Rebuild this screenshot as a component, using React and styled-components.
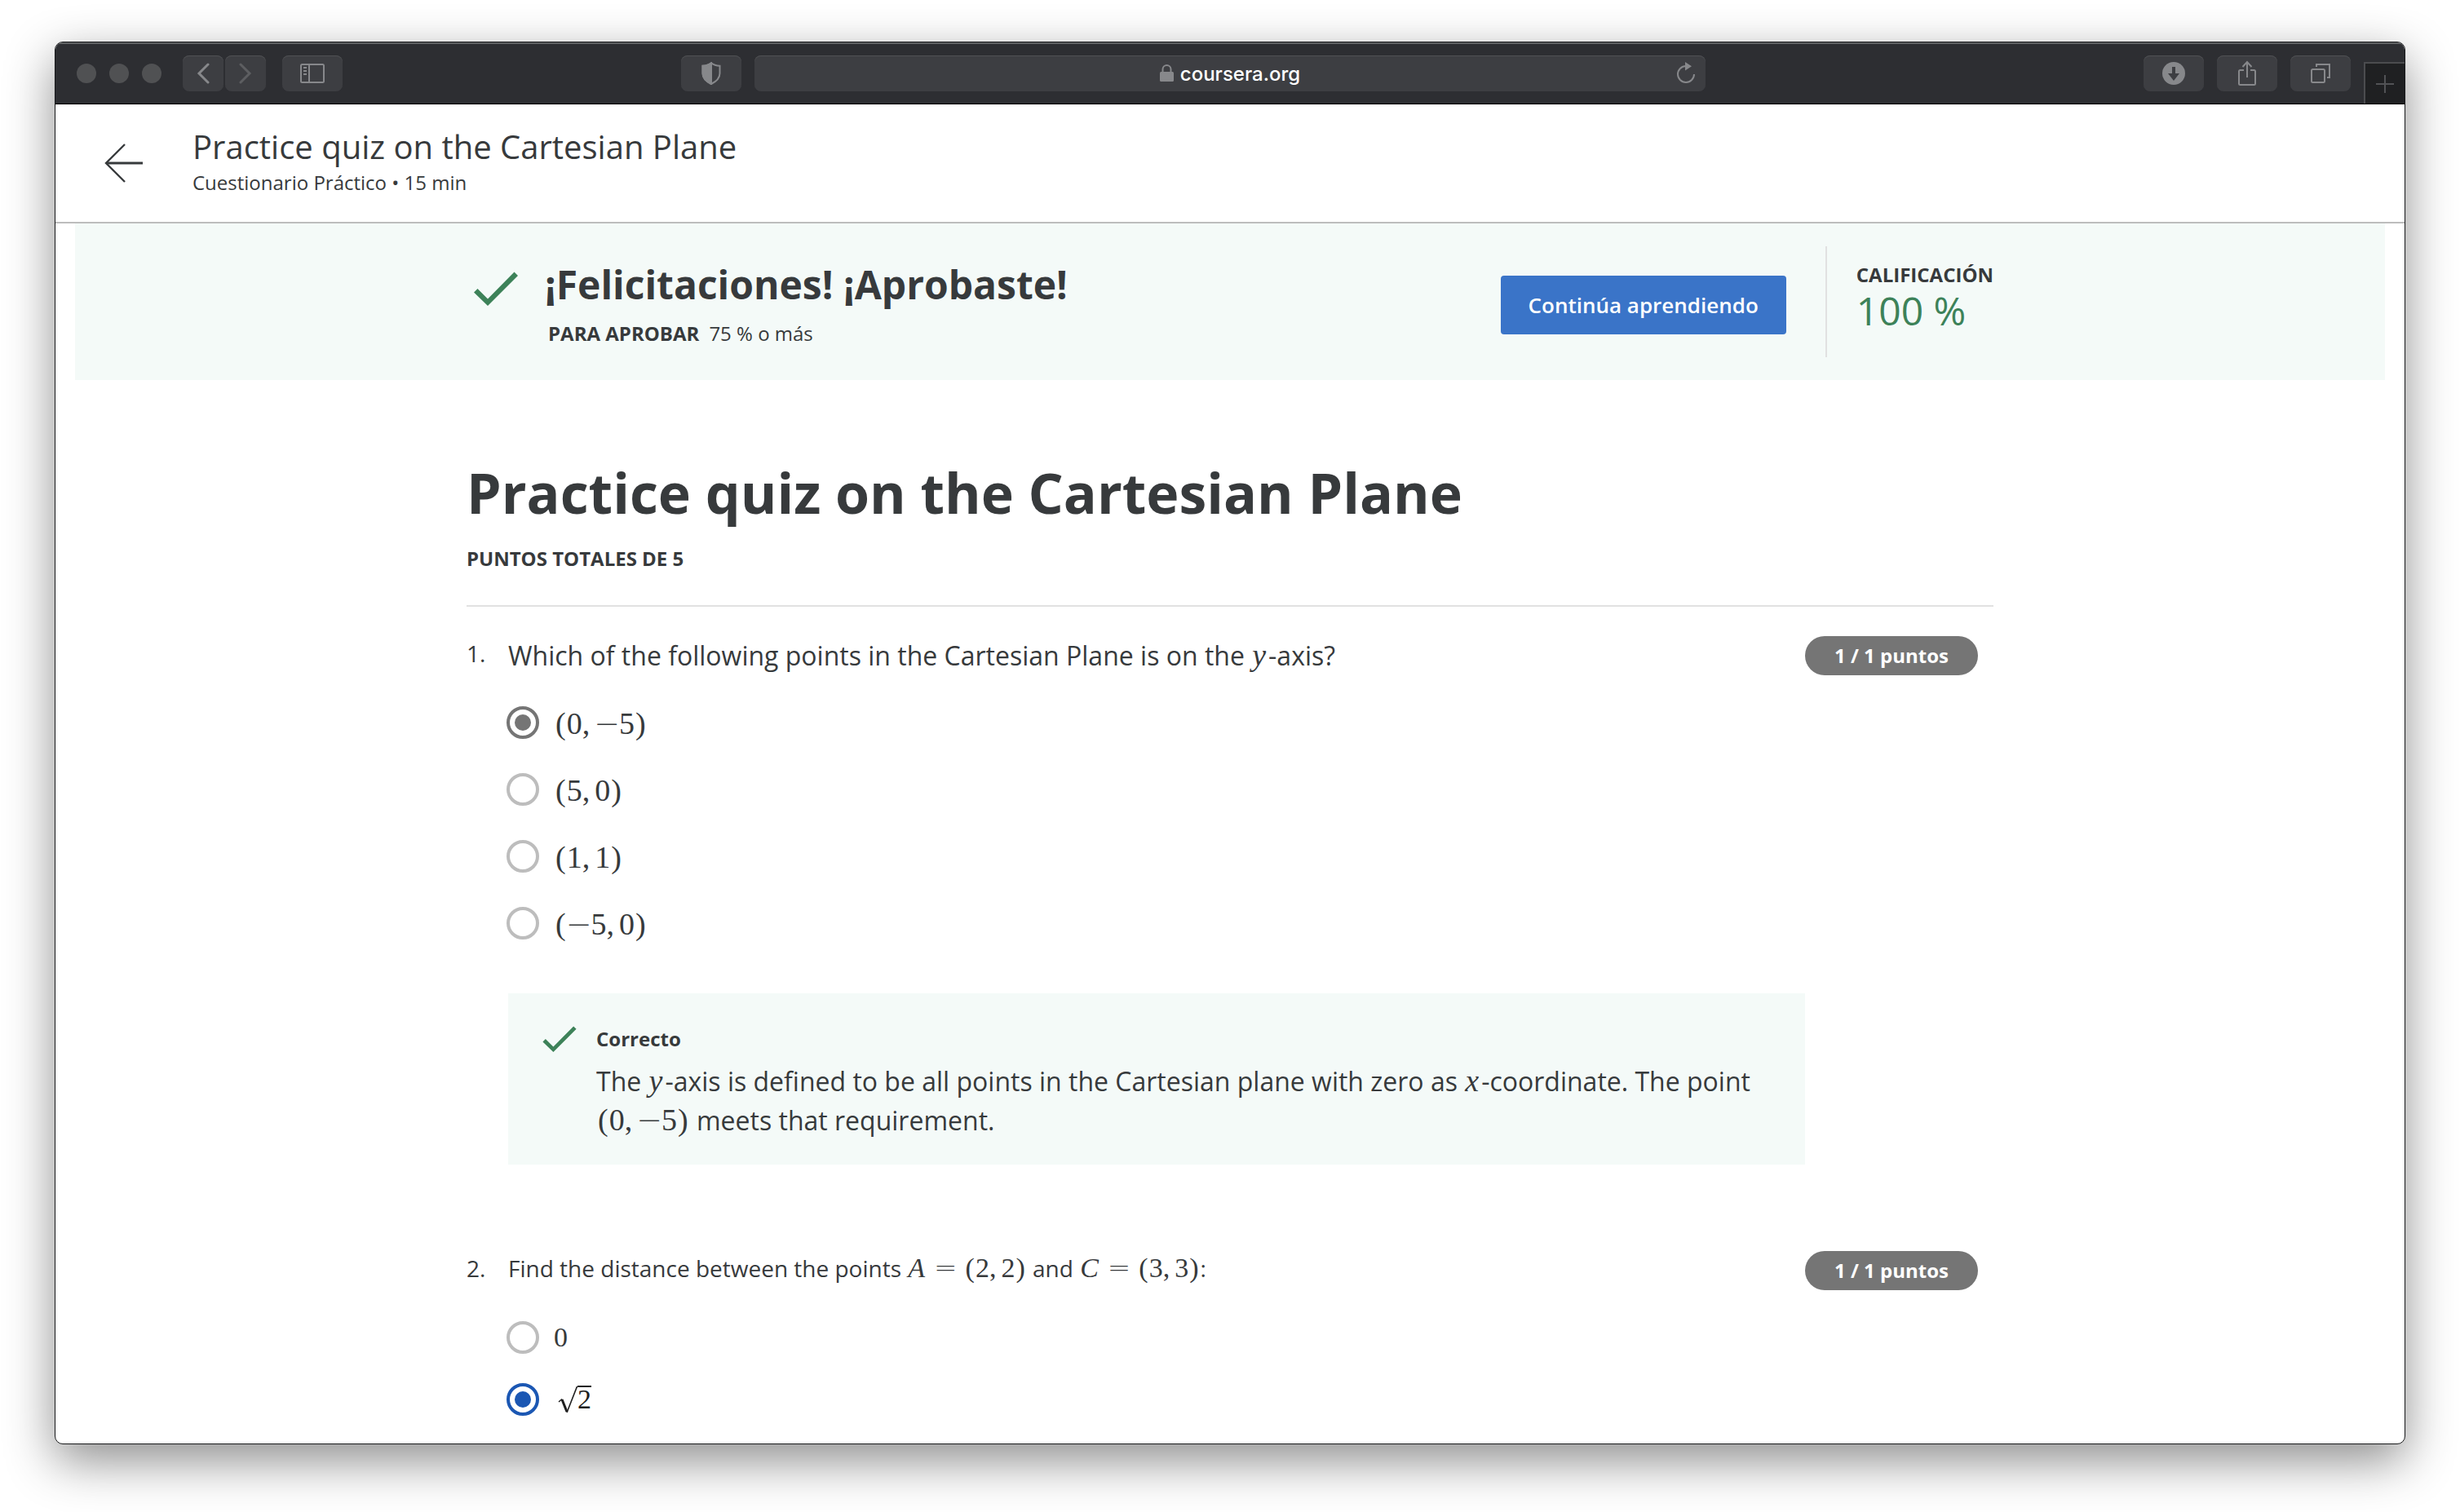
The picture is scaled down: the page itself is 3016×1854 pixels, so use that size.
import React from 'react';
import styled, { createGlobalStyle, css } from 'styled-components';

const INK = '#373a3c';
const GREEN = '#3d8259';
const MINT = '#f4faf8';
const CHROME = '#2d2e32';
const CHROME_BUTTON = '#3d3e42';
const CHROME_ICON = '#87888b';

const GlobalStyle = createGlobalStyle`
  *, *::before, *::after { box-sizing: border-box; }
  body {
    margin: 0;
    background: #fff;
    color: ${INK};
    font-family: 'Open Sans', 'Noto Sans', sans-serif;
  }
  h1, h2, h3, p, ol, fieldset { margin: 0; padding: 0; border: 0; }
  button, input { font: inherit; color: inherit; margin: 0; }
  svg { display: block; flex: none; }
`;

const Desktop = styled.div`
  min-height: 100vh;
  display: flex;
  flex-direction: column;
  padding: 51px 67px 83px;
  overflow: hidden;
`;

const BrowserWindow = styled.div`
  flex: 1;
  border: 1px solid #17181a;
  border-radius: 10px;
  background: #fff;
  overflow: hidden;
  box-shadow: 0 20px 60px rgba(0, 0, 0, 0.45);
`;

/* Browser chrome */

const Toolbar = styled.div`
  display: grid;
  grid-template-columns: 767fr 1256fr 857fr;
  height: 76px;
  background: ${CHROME};
  border-bottom: 1px solid #000;
  box-shadow: inset 0 2px 0 #5f6163;
`;

const ToolGroup = styled.div`
  display: flex;
  align-items: center;
  gap: ${(p) => p.$gap}px;
  justify-content: ${(p) => (p.$end ? 'flex-end' : 'flex-start')};
  padding-left: ${(p) => p.$inset || 0}px;
`;

const TrafficLights = styled.div`
  display: flex;
  gap: 16px;
  margin-right: 6px;
`;

const Light = styled.button`
  width: 24px;
  height: 24px;
  padding: 0;
  border: 0;
  border-radius: 50%;
  background: #505153;
`;

const HistoryPair = styled.div`
  display: flex;
  gap: 2px;
`;

const chromeSurface = css`
  height: 44px;
  border: 0;
  border-radius: 8px;
  background: ${CHROME_BUTTON};
  box-shadow: inset 0 1px 0 #505154;
`;

const ToolButton = styled.button`
  ${chromeSurface}
  display: flex;
  align-items: center;
  justify-content: center;
  flex: none;
  width: ${(p) => (p.$narrow ? 50 : 74)}px;
  padding: 0;
  color: ${(p) => (p.$dim ? '#5d5e61' : CHROME_ICON)};
`;

const AddressBar = styled.form`
  ${chromeSurface}
  flex: 1;
  display: flex;
  align-items: center;
  padding: 0 12px;
  color: ${CHROME_ICON};
`;

const AddressLabel = styled.label`
  flex: 1;
  display: flex;
  align-items: center;
  justify-content: center;
  gap: 8px;
  padding-left: 24px;
`;

const AddressInput = styled.input`
  field-sizing: content;
  padding: 2px 0 0;
  border: 0;
  background: none;
  color: #fff;
  font-family: Inter, Roboto, sans-serif;
  font-size: 24px;
  font-weight: 500;
  line-height: 32px;
`;

const ReloadButton = styled.button`
  padding: 0;
  border: 0;
  background: none;
`;

const NewTabButton = styled.button`
  align-self: flex-end;
  display: flex;
  align-items: center;
  justify-content: center;
  width: 50px;
  height: 51px;
  padding: 0;
  border: solid #4b4c4f;
  border-width: 2px 0 0 2px;
  background: #1f2022;
  color: #515255;
`;

/* Course header */

const CourseHeader = styled.header`
  display: flex;
  align-items: center;
  gap: 60px;
  height: 146px;
  padding: 0 60px;
  border-bottom: 2px solid #bdbdbd;
`;

const BackLink = styled.a`
  color: ${INK};
`;

const HeaderText = styled.div`
  padding-bottom: 4px;
`;

const HeaderTitle = styled.h2`
  font-size: 40px;
  font-weight: 400;
  line-height: 48px;
`;

const HeaderMeta = styled.p`
  margin-top: 4px;
  font-size: 24px;
  line-height: 32px;
`;

/* Result banner */

const Banner = styled.section`
  margin: 0 24px;
  padding: 28px 24px;
  background: ${MINT};
`;

const Column = styled.div`
  max-width: 1872px;
  margin: 0 auto;
`;

const BannerRow = styled(Column)`
  display: flex;
  align-items: flex-start;
  height: 136px;
`;

const ResultCheck = styled.div`
  width: 96px;
  padding: 31px 0 0 9px;
`;

const Result = styled.div`
  flex: 1;
  padding-top: 15px;
`;

const ResultTitle = styled.h2`
  font-size: 48px;
  font-weight: 700;
  line-height: 64px;
`;

const PassMark = styled.p`
  display: flex;
  gap: 12px;
  margin-top: 12px;
  padding-left: 4px;
  font-size: 24px;
  line-height: 32px;
`;

const ContinueButton = styled.button`
  height: 72px;
  margin: 36px 48px 0 0;
  padding: 0 34px;
  border: 0;
  border-radius: 4px;
  background: #3a74c8;
  color: #fff;
  font-size: 26px;
  font-weight: 600;
  line-height: 32px;
`;

const Grade = styled.div`
  height: 100%;
  padding: 19px 0 0 36px;
  border-left: 2px solid #e1e1e1;
`;

const GradeLabel = styled.p`
  font-size: 24px;
  font-weight: 700;
  line-height: 32px;
`;

const GradeValue = styled.p`
  color: ${GREEN};
  font-size: 48px;
  line-height: 56px;
`;

/* Quiz */

const Quiz = styled.main`
  padding: 94px 48px 30px;
`;

const QuizTitle = styled.h1`
  font-size: 68px;
  font-weight: 700;
  line-height: 88px;
`;

const TotalPoints = styled.p`
  margin: 21px 0 41px;
  font-size: 24px;
  font-weight: 700;
  line-height: 32px;
`;

const QuestionList = styled.ol`
  display: grid;
  gap: 106px;
  padding-top: 36px;
  border-top: 2px solid #e1e1e1;
  list-style: none;
`;

const Question = styled.li`
  display: grid;
  grid-template-columns: 51px minmax(0, 1fr) 231px;
  align-items: start;
`;

const QuestionNumber = styled.span`
  font-size: 28px;
  line-height: 42px;
`;

const Prompt = styled.p`
  min-height: 48px;
  font-size: ${(p) => (p.$large ? 32 : 28)}px;
  line-height: ${(p) => (p.$large ? 48 : 42)}px;
`;

const PointsBadge = styled.span`
  justify-self: start;
  padding: 8px 36px;
  border-radius: 24px;
  background: #757575;
  color: #fff;
  font-size: 24px;
  font-weight: 700;
  line-height: 32px;
`;

const Answers = styled.div`
  grid-column: 2;
`;

const Options = styled.fieldset`
  display: grid;
  justify-items: start;
  gap: ${(p) => (p.$large ? 34 : 28)}px;
  margin-left: -2px;
  padding-top: 34px;
`;

const OptionLabel = styled.label`
  display: flex;
  align-items: center;
  gap: 18px;
  height: 48px;
`;

const Radio = styled.input`
  appearance: none;
  width: 40px;
  height: 40px;
  padding: 6px;
  border: 4px solid #bdbdbd;
  border-radius: 50%;
  background-clip: content-box;
  &:checked {
    border-color: ${(p) => p.$tone};
    background-color: ${(p) => p.$tone};
  }
`;

const OptionMath = styled.span`
  padding-top: ${(p) => (p.$large ? 4 : 0)}px;
  font-size: ${(p) => (p.$large ? 32 : 28)}px;
  line-height: 48px;
`;

const Feedback = styled.section`
  display: flex;
  margin-top: 62px;
  padding: 40px 32px 30px 42px;
  background: ${MINT};
`;

const FeedbackCheck = styled.div`
  flex: none;
  width: 66px;
`;

const FeedbackTitle = styled.h3`
  margin-bottom: 12px;
  font-size: 24px;
  font-weight: 700;
  line-height: 32px;
`;

const FeedbackText = styled.p`
  font-size: 32px;
  line-height: 48px;
`;

/* Formulas */

const Formula = styled.span`
  font-family: 'Liberation Serif', 'Times New Roman', serif;
  font-size: ${(p) => (p.$large ? 38 : 34)}px;
  line-height: 0;
  white-space: nowrap;
`;

const Symbol = styled.span`
  margin: ${(p) => p.$space || '0'};
  font-style: ${(p) => (p.$italic ? 'italic' : 'normal')};
`;

const Operator = styled.span`
  margin: ${(p) => p.$space};
  font-family: 'DejaVu Sans', sans-serif;
  font-weight: 200;
`;

const Root = styled.span`
  display: flex;
  align-items: flex-start;
  padding-left: 5px;
  color: #1f1f1f;
`;

const Radicand = styled.span`
  border-top: 2px solid #1f1f1f;
  line-height: 30px;
`;

const SPACES = {
  '(': '0 1px 0 2px',
  ')': '0 2px 0 1px',
  ',': '0 6px 0 0',
};

const OPERATOR_SPACES = {
  '−': '0 -1px',
  '=': '0 8px',
};

const Math = ({ children, large }) => (
  <Formula $large={large}>
    {[...children].map((ch, i) =>
      OPERATOR_SPACES[ch] ? (
        <Operator key={i} $space={OPERATOR_SPACES[ch]}>
          {ch}
        </Operator>
      ) : (
        <Symbol
          key={i}
          $italic={/[a-zA-Z]/.test(ch)}
          $space={SPACES[ch] || (/[a-zA-Z]/.test(ch) ? '0 3px 0 1px' : '0')}
        >
          {ch}
        </Symbol>
      )
    )}
  </Formula>
);

const SquareRoot = ({ children }) => (
  <Root>
    <svg width="24" height="34" viewBox="0 0 24 34" fill="none" stroke="currentColor">
      <path d="M1 20 L5 16.5" strokeWidth="1.5" />
      <path d="M5 17 L11 32" strokeWidth="3" />
      <path d="M11 33 L23.5 1" strokeWidth="1.6" />
    </svg>
    <Radicand>
      <Formula>{children}</Formula>
    </Radicand>
  </Root>
);

const Check = ({ width, height }) => (
  <svg width={width} height={height} viewBox="0 0 54 42" fill={GREEN} aria-hidden="true">
    <path d="M0 25.5 L4.5 21 L17 33.5 L49.5 0.5 L54 5 L17 42 Z" />
  </svg>
);

const Option = ({ group, label, checked, large, tone = '#757575', children }) => (
  <OptionLabel>
    <Radio type="radio" name={group} defaultChecked={checked} $tone={tone} aria-label={label} />
    <OptionMath $large={large}>{children}</OptionMath>
  </OptionLabel>
);

const BrowserToolbar = () => (
  <Toolbar>
    <ToolGroup $gap={20} $inset={26}>
      <TrafficLights>
        <Light aria-label="Cerrar" />
        <Light aria-label="Minimizar" />
        <Light aria-label="Ampliar" />
      </TrafficLights>
      <HistoryPair>
        <ToolButton $narrow aria-label="Atrás">
          <svg width="16" height="26" viewBox="0 0 16 26" fill="none" stroke="currentColor" strokeWidth="3">
            <path d="M14 2 L3 13 L14 24" strokeLinecap="round" />
          </svg>
        </ToolButton>
        <ToolButton $narrow $dim aria-label="Adelante">
          <svg width="16" height="26" viewBox="0 0 16 26" fill="none" stroke="currentColor" strokeWidth="3">
            <path d="M2 2 L13 13 L2 24" strokeLinecap="round" />
          </svg>
        </ToolButton>
      </HistoryPair>
      <ToolButton aria-label="Barra lateral">
        <svg width="30" height="24" viewBox="0 0 30 24" fill="none" stroke="currentColor" strokeWidth="2">
          <rect x="1" y="1" width="28" height="22" rx="1.5" />
          <path d="M11 1 V23 M4 5 H8 M4 9 H8 M4 13 H8" />
        </svg>
      </ToolButton>
    </ToolGroup>
    <ToolGroup $gap={16}>
      <ToolButton aria-label="Informe de privacidad">
        <svg width="24" height="28" viewBox="0 0 24 28" fill="none" stroke="currentColor" strokeWidth="2">
          <path d="M12 1.2 C15 3.6 19 4.6 22.5 4.8 V14 C22.5 20 17 24.5 12 27 C7 24.5 1.5 20 1.5 14 V4.8 C5 4.6 9 3.6 12 1.2 Z" />
          <path d="M12 1.2 V27 C7 24.5 1.5 20 1.5 14 V4.8 C5 4.6 9 3.6 12 1.2 Z" fill="currentColor" />
        </svg>
      </ToolButton>
      <AddressBar onSubmit={(e) => e.preventDefault()}>
        <AddressLabel>
          <svg width="17" height="21" viewBox="0 0 17 21" fill="currentColor" aria-hidden="true">
            <rect x="0" y="9" width="17" height="12" rx="1.5" />
            <path d="M3.5 10 V6 A5 5 0 0 1 13.5 6 V10" fill="none" stroke="currentColor" strokeWidth="2" />
          </svg>
          <AddressInput type="text" defaultValue="coursera.org" aria-label="Dirección" />
        </AddressLabel>
        <ReloadButton type="button" aria-label="Recargar">
          <svg width="24" height="27" viewBox="0 0 24 27" fill="none" stroke="currentColor" strokeWidth="2">
            <path d="M12 5 A10 10 0 1 0 22 15" />
            <path d="M11 0 L19 5.2 L11 10.5 Z" fill="currentColor" stroke="none" />
          </svg>
        </ReloadButton>
      </AddressBar>
    </ToolGroup>
    <ToolGroup $gap={16} $end>
      <ToolButton aria-label="Descargas">
        <svg width="28" height="28" viewBox="0 0 28 28">
          <circle cx="14" cy="14" r="14" fill="currentColor" />
          <path d="M12 6 H16 V14 H21 L14 23 L7 14 H12 Z" fill={CHROME_BUTTON} />
        </svg>
      </ToolButton>
      <ToolButton aria-label="Compartir">
        <svg width="22" height="32" viewBox="0 0 22 32" fill="none" stroke="currentColor" strokeWidth="2">
          <path d="M7 12 H2.5 A1.5 1.5 0 0 0 1 13.5 V28.5 A1.5 1.5 0 0 0 2.5 30 H19.5 A1.5 1.5 0 0 0 21 28.5 V13.5 A1.5 1.5 0 0 0 19.5 12 H15" />
          <path d="M11 21 V2.5 M5.5 8 L11 2 L16.5 8" />
        </svg>
      </ToolButton>
      <ToolButton aria-label="Mostrar pestañas">
        <svg width="24" height="24" viewBox="0 0 24 24" fill="none" stroke="currentColor" strokeWidth="2">
          <rect x="1" y="7" width="16" height="16" rx="1.5" />
          <path d="M7 4 V1 H23 V17 H20" />
        </svg>
      </ToolButton>
      <NewTabButton aria-label="Pestaña nueva">
        <svg width="22" height="22" viewBox="0 0 22 22" stroke="currentColor" strokeWidth="2">
          <path d="M11 0 V22 M0 11 H22" />
        </svg>
      </NewTabButton>
    </ToolGroup>
  </Toolbar>
);

export default function App() {
  return (
    <>
      <GlobalStyle />
      <Desktop>
        <BrowserWindow>
          <BrowserToolbar />
          <CourseHeader>
            <BackLink href="#curso" aria-label="Volver">
              <svg width="48" height="48" viewBox="0 0 48 48" fill="none" stroke="currentColor" strokeWidth="2.4">
                <path d="M25 1 L2 24 L25 47" />
                <path d="M2 24 H47" strokeWidth="3" />
              </svg>
            </BackLink>
            <HeaderText>
              <HeaderTitle>Practice quiz on the Cartesian Plane</HeaderTitle>
              <HeaderMeta>Cuestionario Práctico • 15 min</HeaderMeta>
            </HeaderText>
          </CourseHeader>

          <Banner>
            <BannerRow>
              <ResultCheck>
                <Check width={54} height={42} />
              </ResultCheck>
              <Result>
                <ResultTitle>¡Felicitaciones! ¡Aprobaste!</ResultTitle>
                <PassMark>
                  <strong>PARA APROBAR</strong>
                  <span>75 % o más</span>
                </PassMark>
              </Result>
              <ContinueButton type="button">Continúa aprendiendo</ContinueButton>
              <Grade>
                <GradeLabel>CALIFICACIÓN</GradeLabel>
                <GradeValue>100 %</GradeValue>
              </Grade>
            </BannerRow>
          </Banner>

          <Quiz>
            <Column>
              <QuizTitle>Practice quiz on the Cartesian Plane</QuizTitle>
              <TotalPoints>PUNTOS TOTALES DE 5</TotalPoints>
              <QuestionList>
                <Question>
                  <QuestionNumber>1.</QuestionNumber>
                  <Prompt $large>
                    Which of the following points in the Cartesian Plane is on the <Math large>y</Math>-axis?
                  </Prompt>
                  <PointsBadge>1 / 1 puntos</PointsBadge>
                  <Answers>
                    <Options $large>
                      <Option group="q1" label="(0, −5)" large checked><Math large>(0,−5)</Math></Option>
                      <Option group="q1" label="(5, 0)" large><Math large>(5,0)</Math></Option>
                      <Option group="q1" label="(1, 1)" large><Math large>(1,1)</Math></Option>
                      <Option group="q1" label="(−5, 0)" large><Math large>(−5,0)</Math></Option>
                    </Options>
                    <Feedback>
                      <FeedbackCheck>
                        <Check width={42} height={32} />
                      </FeedbackCheck>
                      <div>
                        <FeedbackTitle>Correcto</FeedbackTitle>
                        <FeedbackText>
                          The <Math large>y</Math>-axis is defined to be all points in the Cartesian plane with zero
                          as <Math large>x</Math>-coordinate. The point <Math large>(0,−5)</Math> meets that
                          requirement.
                        </FeedbackText>
                      </div>
                    </Feedback>
                  </Answers>
                </Question>
                <Question>
                  <QuestionNumber>2.</QuestionNumber>
                  <Prompt>
                    Find the distance between the points <Math>A=(2,2)</Math> and <Math>C=(3,3)</Math>:
                  </Prompt>
                  <PointsBadge>1 / 1 puntos</PointsBadge>
                  <Answers>
                    <Options>
                      <Option group="q2" label="0"><Math>0</Math></Option>
                      <Option group="q2" label="√2" tone="#1b57b3" checked><SquareRoot>2</SquareRoot></Option>
                    </Options>
                  </Answers>
                </Question>
              </QuestionList>
            </Column>
          </Quiz>
        </BrowserWindow>
      </Desktop>
    </>
  );
}
